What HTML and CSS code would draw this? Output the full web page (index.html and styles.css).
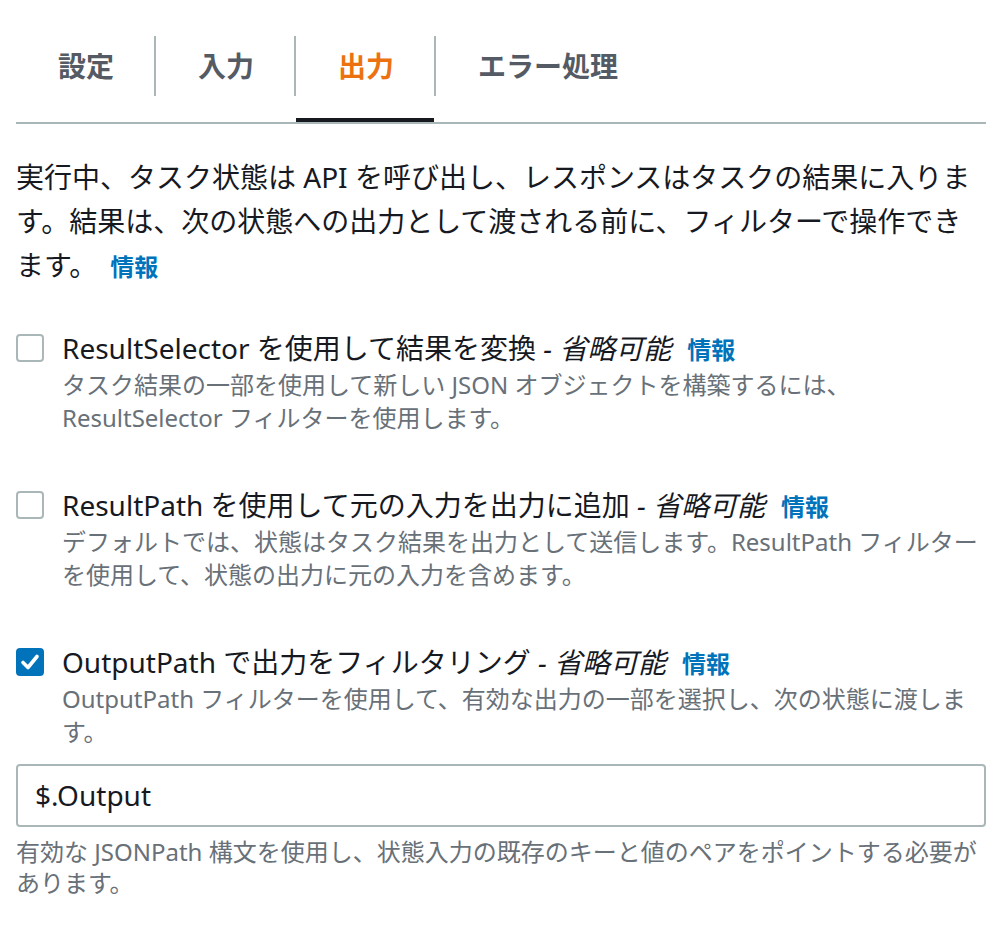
FILE: index.html
```html
<!DOCTYPE html>
<html lang="ja">
<head>
<meta charset="utf-8">
<title>出力</title>
<link rel="stylesheet" href="styles.css">
</head>
<body>
<div class="page">
  <div class="tabs">
    <div class="tab"><span class="tab-label">設定</span></div>
    <div class="tab"><span class="tab-label">入力</span></div>
    <div class="tab active"><span class="tab-label">出力</span></div>
    <div class="tab last"><span class="tab-label">エラー処理</span></div>
  </div>

  <p class="intro">実行中、タスク状態は API を呼び出し、レスポンスはタスクの結果に入ります。結果は、次の状態への出力として渡される前に、フィルターで操作できます。<a class="info info-intro">情報</a></p>

  <div class="option">
    <span class="box"></span>
    <div class="option-body">
      <div class="label">ResultSelector を使用して結果を変換 <i class="opt">- 省略可能</i><a class="info info-label">情報</a></div>
      <div class="desc">タスク結果の一部を使用して新しい JSON オブジェクトを構築するには、ResultSelector フィルターを使用します。</div>
    </div>
  </div>

  <div class="option">
    <span class="box"></span>
    <div class="option-body">
      <div class="label">ResultPath を使用して元の入力を出力に追加 <i class="opt">- 省略可能</i><a class="info info-label">情報</a></div>
      <div class="desc">デフォルトでは、状態はタスク結果を出力として送信します。ResultPath フィルターを使用して、状態の出力に元の入力を含めます。</div>
    </div>
  </div>

  <div class="option">
    <span class="box checked">
      <svg viewBox="0 0 28 28" width="28" height="28"><path d="M7 14.5 L12 19.5 L21 8.5" fill="none" stroke="#ffffff" stroke-width="3.6" stroke-linecap="round" stroke-linejoin="round"/></svg>
    </span>
    <div class="option-body">
      <div class="label">OutputPath で出力をフィルタリング <i class="opt">- 省略可能</i><a class="info info-label">情報</a></div>
      <div class="desc">OutputPath フィルターを使用して、有効な出力の一部を選択し、次の状態に渡します。</div>
    </div>
  </div>

  <div class="field">$.Output</div>
  <div class="hint">有効な JSONPath 構文を使用し、状態入力の既存のキーと値のペアをポイントする必要があります。</div>
</div>
</body>
</html>
```

FILE: styles.css
```css
html, body {
  margin: 0;
  padding: 0;
  background: #ffffff;
}

body {
  font-family: "Noto Sans", "Noto Sans CJK JP", sans-serif;
  color: #16191f;
}

.page {
  padding: 0 16px;
}

.tabs {
  display: flex;
  padding-top: 20px;
  border-bottom: 2px solid #aab7b8;
}

.tab {
  position: relative;
  padding: 16px 0 26px;
  font-size: 28px;
  font-weight: 700;
  color: #545b64;
}

.tab-label {
  display: block;
  line-height: 60px;
  padding: 0 40px 0 42px;
  border-right: 2px solid #aab7b8;
}

.tab.last .tab-label {
  border-right: none;
}

.tab.active {
  color: #ec7211;
}

.tab.active::after {
  content: "";
  position: absolute;
  left: 0;
  right: 2px;
  bottom: 0;
  height: 4px;
  background: #16191f;
}

.intro {
  margin: 31px 0 0;
  font-size: 28px;
  line-height: 44px;
}

.info {
  color: #0073bb;
  font-weight: 700;
  font-size: 24px;
  line-height: 1;
}

.info-intro {
  margin-left: 13px;
}

.info-label {
  margin-left: 16px;
}

.option {
  display: flex;
  align-items: flex-start;
  margin-top: 41px;
}

.option + .option {
  margin-top: 51px;
}

.box {
  flex: none;
  box-sizing: border-box;
  width: 28px;
  height: 28px;
  margin-top: 6px;
  border: 2px solid #aab7b8;
  border-radius: 4px;
  background: #ffffff;
  display: flex;
  align-items: center;
  justify-content: center;
}

.box.checked {
  border: none;
  background: #0073bb;
}

.option-body {
  margin-left: 18px;
  flex: 1;
}

.label {
  font-size: 28px;
  line-height: 40px;
}

.opt {
  font-style: italic;
}

.desc {
  font-size: 24px;
  line-height: 33px;
  color: #687078;
}

.field {
  margin-top: 16px;
  box-sizing: border-box;
  height: 63px;
  border: 2px solid #aab7b8;
  border-radius: 4px;
  padding: 0 17px;
  font-size: 28px;
  line-height: 59px;
  color: #16191f;
}

.hint {
  margin-top: 9px;
  font-size: 24px;
  line-height: 31px;
  color: #687078;
}
```
